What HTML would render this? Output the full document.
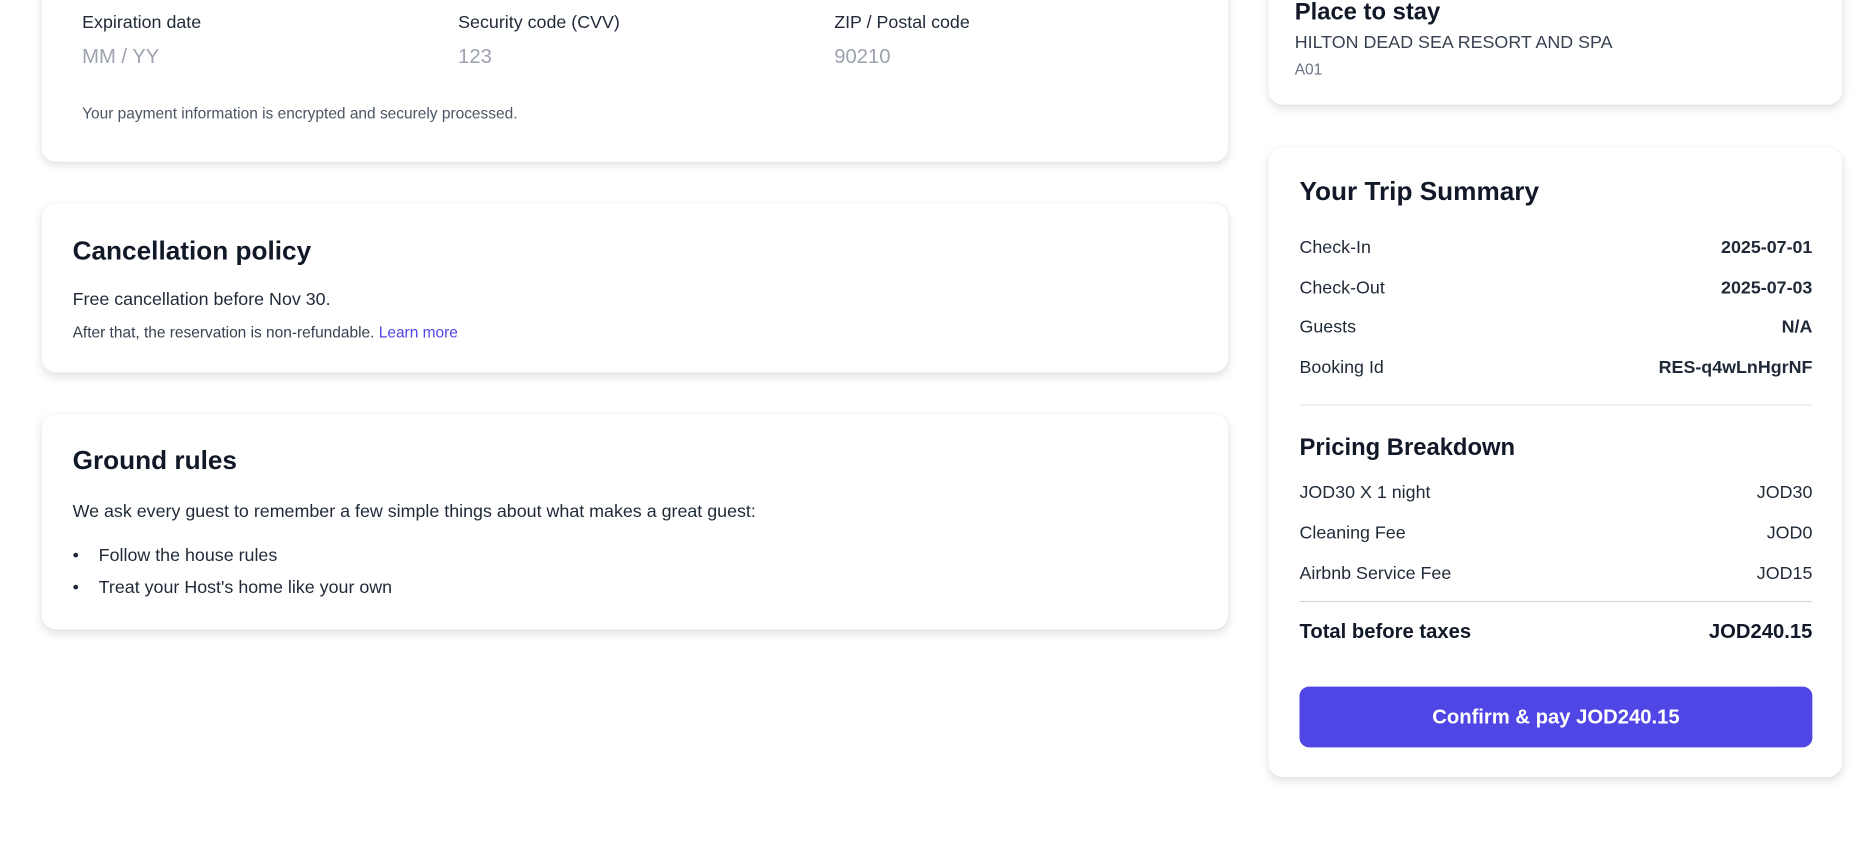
<!DOCTYPE html>
<html><head><meta charset="utf-8"><style>
*{box-sizing:border-box;margin:0;padding:0}
html,body{width:1866px;height:854px;overflow:hidden;background:#fff}
#w{position:absolute;left:0;top:0;width:1568px;height:718px;transform:scale(1.19);transform-origin:0 0;font-family:"Liberation Sans",sans-serif;color:#1f2937}
.card{position:absolute;background:#fff;border-radius:12px;box-shadow:0 3px 8px rgba(0,0,0,.12),0 0 2px rgba(0,0,0,.05)}
.t{position:absolute;white-space:nowrap;transform:translateY(-50%)}
.r{right:25px;text-align:right;font-weight:bold}
</style></head><body><div id="w">
<div class="card" style="left:35px;top:-20px;width:997px;height:156px">
<div class="t" style="left:34px;top:39px;font-size:15px">Expiration date</div>
<div class="t" style="left:350px;top:39px;font-size:15px">Security code (CVV)</div>
<div class="t" style="left:666px;top:39px;font-size:15px">ZIP / Postal code</div>
<div class="t" style="left:34px;top:68px;font-size:17px;color:#9ca3af">MM / YY</div>
<div class="t" style="left:350px;top:68px;font-size:17px;color:#9ca3af">123</div>
<div class="t" style="left:666px;top:68px;font-size:17px;color:#9ca3af">90210</div>
<div class="t" style="left:34px;top:115px;font-size:13px;color:#4b5563">Your payment information is encrypted and securely processed.</div>
</div>
<div class="card" style="left:35px;top:171px;width:997px;height:142px">
<div class="t" style="left:26px;top:40px;font-size:22px;font-weight:bold;color:#111827">Cancellation policy</div>
<div class="t" style="left:26px;top:81px;font-size:15px">Free cancellation before Nov 30.</div>
<div class="t" style="left:26px;top:108px;font-size:13px;color:#374151">After that, the reservation is non-refundable. <span style="color:#4f46e5">Learn more</span></div>
</div>
<div class="card" style="left:35px;top:348px;width:997px;height:181px">
<div class="t" style="left:26px;top:39px;font-size:22px;font-weight:bold;color:#111827">Ground rules</div>
<div class="t" style="left:26px;top:82px;font-size:15px">We ask every guest to remember a few simple things about what makes a great guest:</div>
<div class="t" style="left:26px;top:119px;font-size:15px">•&nbsp;&nbsp;&nbsp;&nbsp;Follow the house rules</div>
<div class="t" style="left:26px;top:146px;font-size:15px">•&nbsp;&nbsp;&nbsp;&nbsp;Treat your Host's home like your own</div>
</div>
<div class="card" style="left:1066px;top:-20px;width:482px;height:108px">
<div class="t" style="left:22px;top:31px;font-size:20px;font-weight:bold;color:#111827">Place to stay</div>
<div class="t" style="left:22px;top:56px;font-size:15px;color:#374151">HILTON DEAD SEA RESORT AND SPA</div>
<div class="t" style="left:22px;top:78px;font-size:13px;color:#6b7280">A01</div>
</div>
<div class="card" style="left:1066px;top:124px;width:482px;height:529px">
<div class="t" style="left:26px;top:37px;font-size:22px;font-weight:bold;color:#111827">Your Trip Summary</div>
<div class="t" style="left:26px;top:84px;font-size:15px">Check-In</div><div class="t r" style="top:84px;font-size:15px">2025-07-01</div>
<div class="t" style="left:26px;top:118px;font-size:15px">Check-Out</div><div class="t r" style="top:118px;font-size:15px">2025-07-03</div>
<div class="t" style="left:26px;top:151px;font-size:15px">Guests</div><div class="t r" style="top:151px;font-size:15px">N/A</div>
<div class="t" style="left:26px;top:185px;font-size:15px">Booking Id</div><div class="t r" style="top:185px;font-size:15px">RES-q4wLnHgrNF</div>
<div style="position:absolute;left:26px;right:25px;top:216px;border-top:1px solid #e5e7eb"></div>
<div class="t" style="left:26px;top:253px;font-size:20px;font-weight:bold;color:#111827">Pricing Breakdown</div>
<div class="t" style="left:26px;top:290px;font-size:15px">JOD30 X 1 night</div><div class="t r" style="top:290px;font-size:15px;font-weight:normal">JOD30</div>
<div class="t" style="left:26px;top:324px;font-size:15px">Cleaning Fee</div><div class="t r" style="top:324px;font-size:15px;font-weight:normal">JOD0</div>
<div class="t" style="left:26px;top:358px;font-size:15px">Airbnb Service Fee</div><div class="t r" style="top:358px;font-size:15px;font-weight:normal">JOD15</div>
<div style="position:absolute;left:26px;right:25px;top:381px;border-top:1px solid #d1d5db"></div>
<div class="t" style="left:26px;top:407px;font-size:17px;font-weight:bold;color:#111827">Total before taxes</div><div class="t r" style="top:407px;font-size:17px;color:#111827">JOD240.15</div>
<div style="position:absolute;left:26px;right:25px;top:453px;height:51px;background:#4f46e5;border-radius:8px;color:#fff;font-weight:bold;font-size:17px;display:flex;align-items:center;justify-content:center">Confirm &amp; pay JOD240.15</div>
</div>
</div></body></html>
